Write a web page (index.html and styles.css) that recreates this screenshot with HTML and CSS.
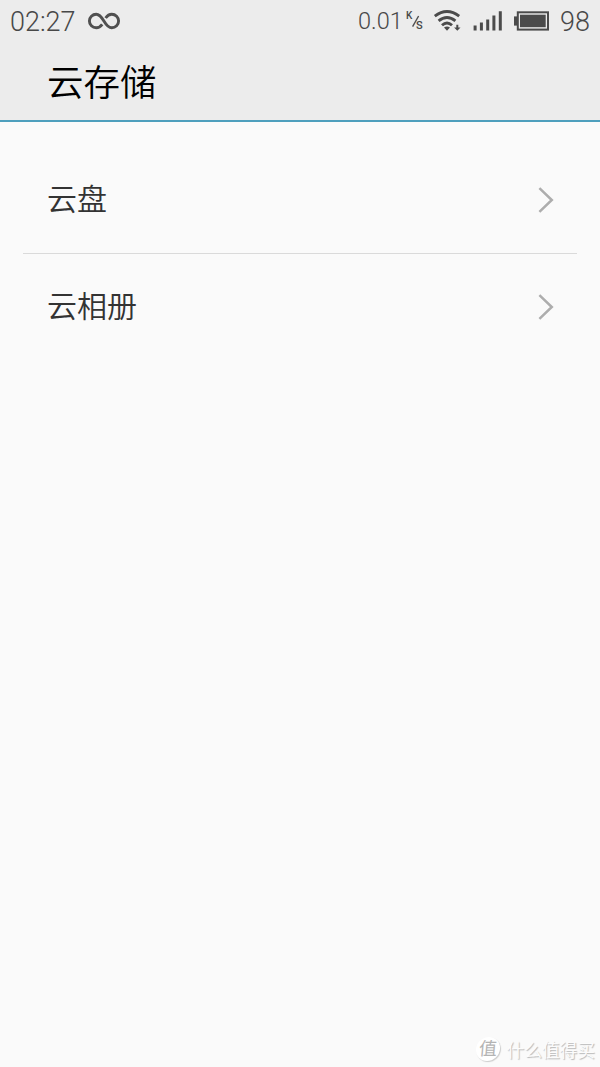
FILE: index.html
```html
<!DOCTYPE html>
<html lang="zh-CN">
<head>
<meta charset="utf-8">
<title>云存储</title>
<link rel="stylesheet" href="styles.css">
</head>
<body>
<div class="screen">
  <header class="header">
    <div class="status">
      <span class="time">02:27</span>
      <svg class="infinity" width="34" height="20" viewBox="0 0 34 20"><path d="M15.2 13.3C13.4 15.8 11.6 16.8 9.2 16.8A6.8 6.8 0 0 1 9.2 3.2C16.5 3.2 17.3 16.8 24.8 16.8A6.8 6.8 0 0 0 24.8 3.2C22.2 3.2 20.3 4.6 18.6 7"/></svg>
      <span class="rate">0.01</span>
      <span class="unit"><span class="unit-k">K</span><svg class="slash" width="9" height="14" viewBox="0 0 9 14"><path d="M.6 12.6L6.6 2"/></svg><span class="unit-s">S</span></span>
      <svg class="wifi" width="30" height="24" viewBox="0 0 30 24"><g class="arcs"><path d="M1.8 7.2Q14 -2 26.2 7.2"/><path d="M5.6 11.8Q14 5 22.4 11.8"/><path d="M9 16.2Q14 11.6 19 16.2"/></g><path d="M11 18.6Q14 16.4 17 18.6L14 21.8ZM23.3 15.8H25.3V18.4H27.5L24.3 21.8L21.1 18.4H23.3Z"/></svg>
      <svg class="signal" width="30" height="22" viewBox="0 0 30 22"><path d="M.6 15.4h3v5.2h-3zM6.9 12.5h3v8.1h-3zM13.2 9.4h3v11.2h-3zM19.4 5.4h3v15.2h-3zM25.8 1.3h3v19.3h-3z"/></svg>
      <svg class="battery" width="36" height="20" viewBox="0 0 36 20"><path d="M0 5.4h3v9.2H0z"/><rect class="case" x="3.8" y="1.3" width="30.2" height="17.3"/><path d="M6 3.7h25.7v12.5H6z"/></svg>
      <span class="level">98</span>
    </div>
    <h1 class="title">云存储</h1>
  </header>
  <main class="list">
    <div class="row"><span class="label">云盘</span><svg class="chevron" width="18" height="28" viewBox="0 0 18 28"><path d="M2.4 2.2L14.8 14L2.4 25.8"/></svg></div>
    <div class="row"><span class="label">云相册</span><svg class="chevron" width="18" height="28" viewBox="0 0 18 28"><path d="M2.4 2.2L14.8 14L2.4 25.8"/></svg></div>
  </main>
  <footer class="watermark"><span class="badge">值</span><span class="brand">什么值得买</span></footer>
</div>
</body>
</html>
```
FILE: styles.css
```css
* { box-sizing: border-box; }
body { margin: 0; background: #fafafa; color: #333; font-family: Roboto, "Noto Sans CJK SC", sans-serif; }
.screen { width: 600px; height: 1067px; display: flex; flex-direction: column; overflow: hidden; }
.header { height: 122px; background: #ececec; border-bottom: 2px solid #4e9fbd; }
.status { height: 42px; padding-left: 10px; display: flex; align-items: center; color: #484848; fill: #4b4b4b; font-weight: 300; white-space: nowrap; }
.status svg { display: block; flex: none; }
.time { width: 77px; padding-top: 2px; font-size: 27px; }
.infinity { fill: none; stroke: #505050; stroke-width: 2.9; }
.rate { width: 48px; margin-left: 237px; font-size: 23.5px; }
.unit { width: 20px; height: 20px; display: grid; grid-template-columns: 6px 4px 10px; font-size: 10px; line-height: 10px; font-weight: 500; }
.slash { grid-row: 1; grid-column: 2; align-self: center; fill: none; stroke: #505050; stroke-width: 1.4; }
.unit-s { grid-row: 1; grid-column: 3; align-self: end; font-size: 11px; }
.wifi { margin-left: 7px; }
.arcs { fill: none; stroke: #4b4b4b; stroke-width: 2.9; }
.signal { margin-left: 10px; }
.battery { margin-left: 11px; }
.case { fill: none; stroke: #4b4b4b; stroke-width: 2; }
.level { margin-left: 10px; padding-top: 2px; font-size: 27px; }
.title { margin: 0; padding: 4px 0 0 47px; font-size: 36.5px; line-height: 76px; height: 78px; font-weight: 350; color: #000; }
.list { flex: 1; padding: 25px 23px 0; }
.row { height: 107px; display: flex; align-items: center; justify-content: space-between; padding: 0 22px 0 24px; font-size: 30px; font-weight: 350; }
.row:first-child { border-bottom: 1px solid #dadada; }
.row:last-child { height: 106px; }
.label { padding-bottom: 6px; }
.chevron { fill: none; stroke: #adadad; stroke-width: 2.5; }
.watermark { height: 36px; padding: 0 5px 1px 0; display: flex; align-items: center; justify-content: flex-end; gap: 7px; color: #fcfcfc; text-shadow: 1px 1px 1px #b8b8b8; }
.badge { width: 24px; height: 24px; border-radius: 50%; background: #fff; box-shadow: 1px 1px 1px #ccc; color: #b4b4b4; text-align: center; font-size: 18px; line-height: 24px; text-shadow: none; transform: skewX(-5deg); }
.brand { font-size: 17.7px; }
```
